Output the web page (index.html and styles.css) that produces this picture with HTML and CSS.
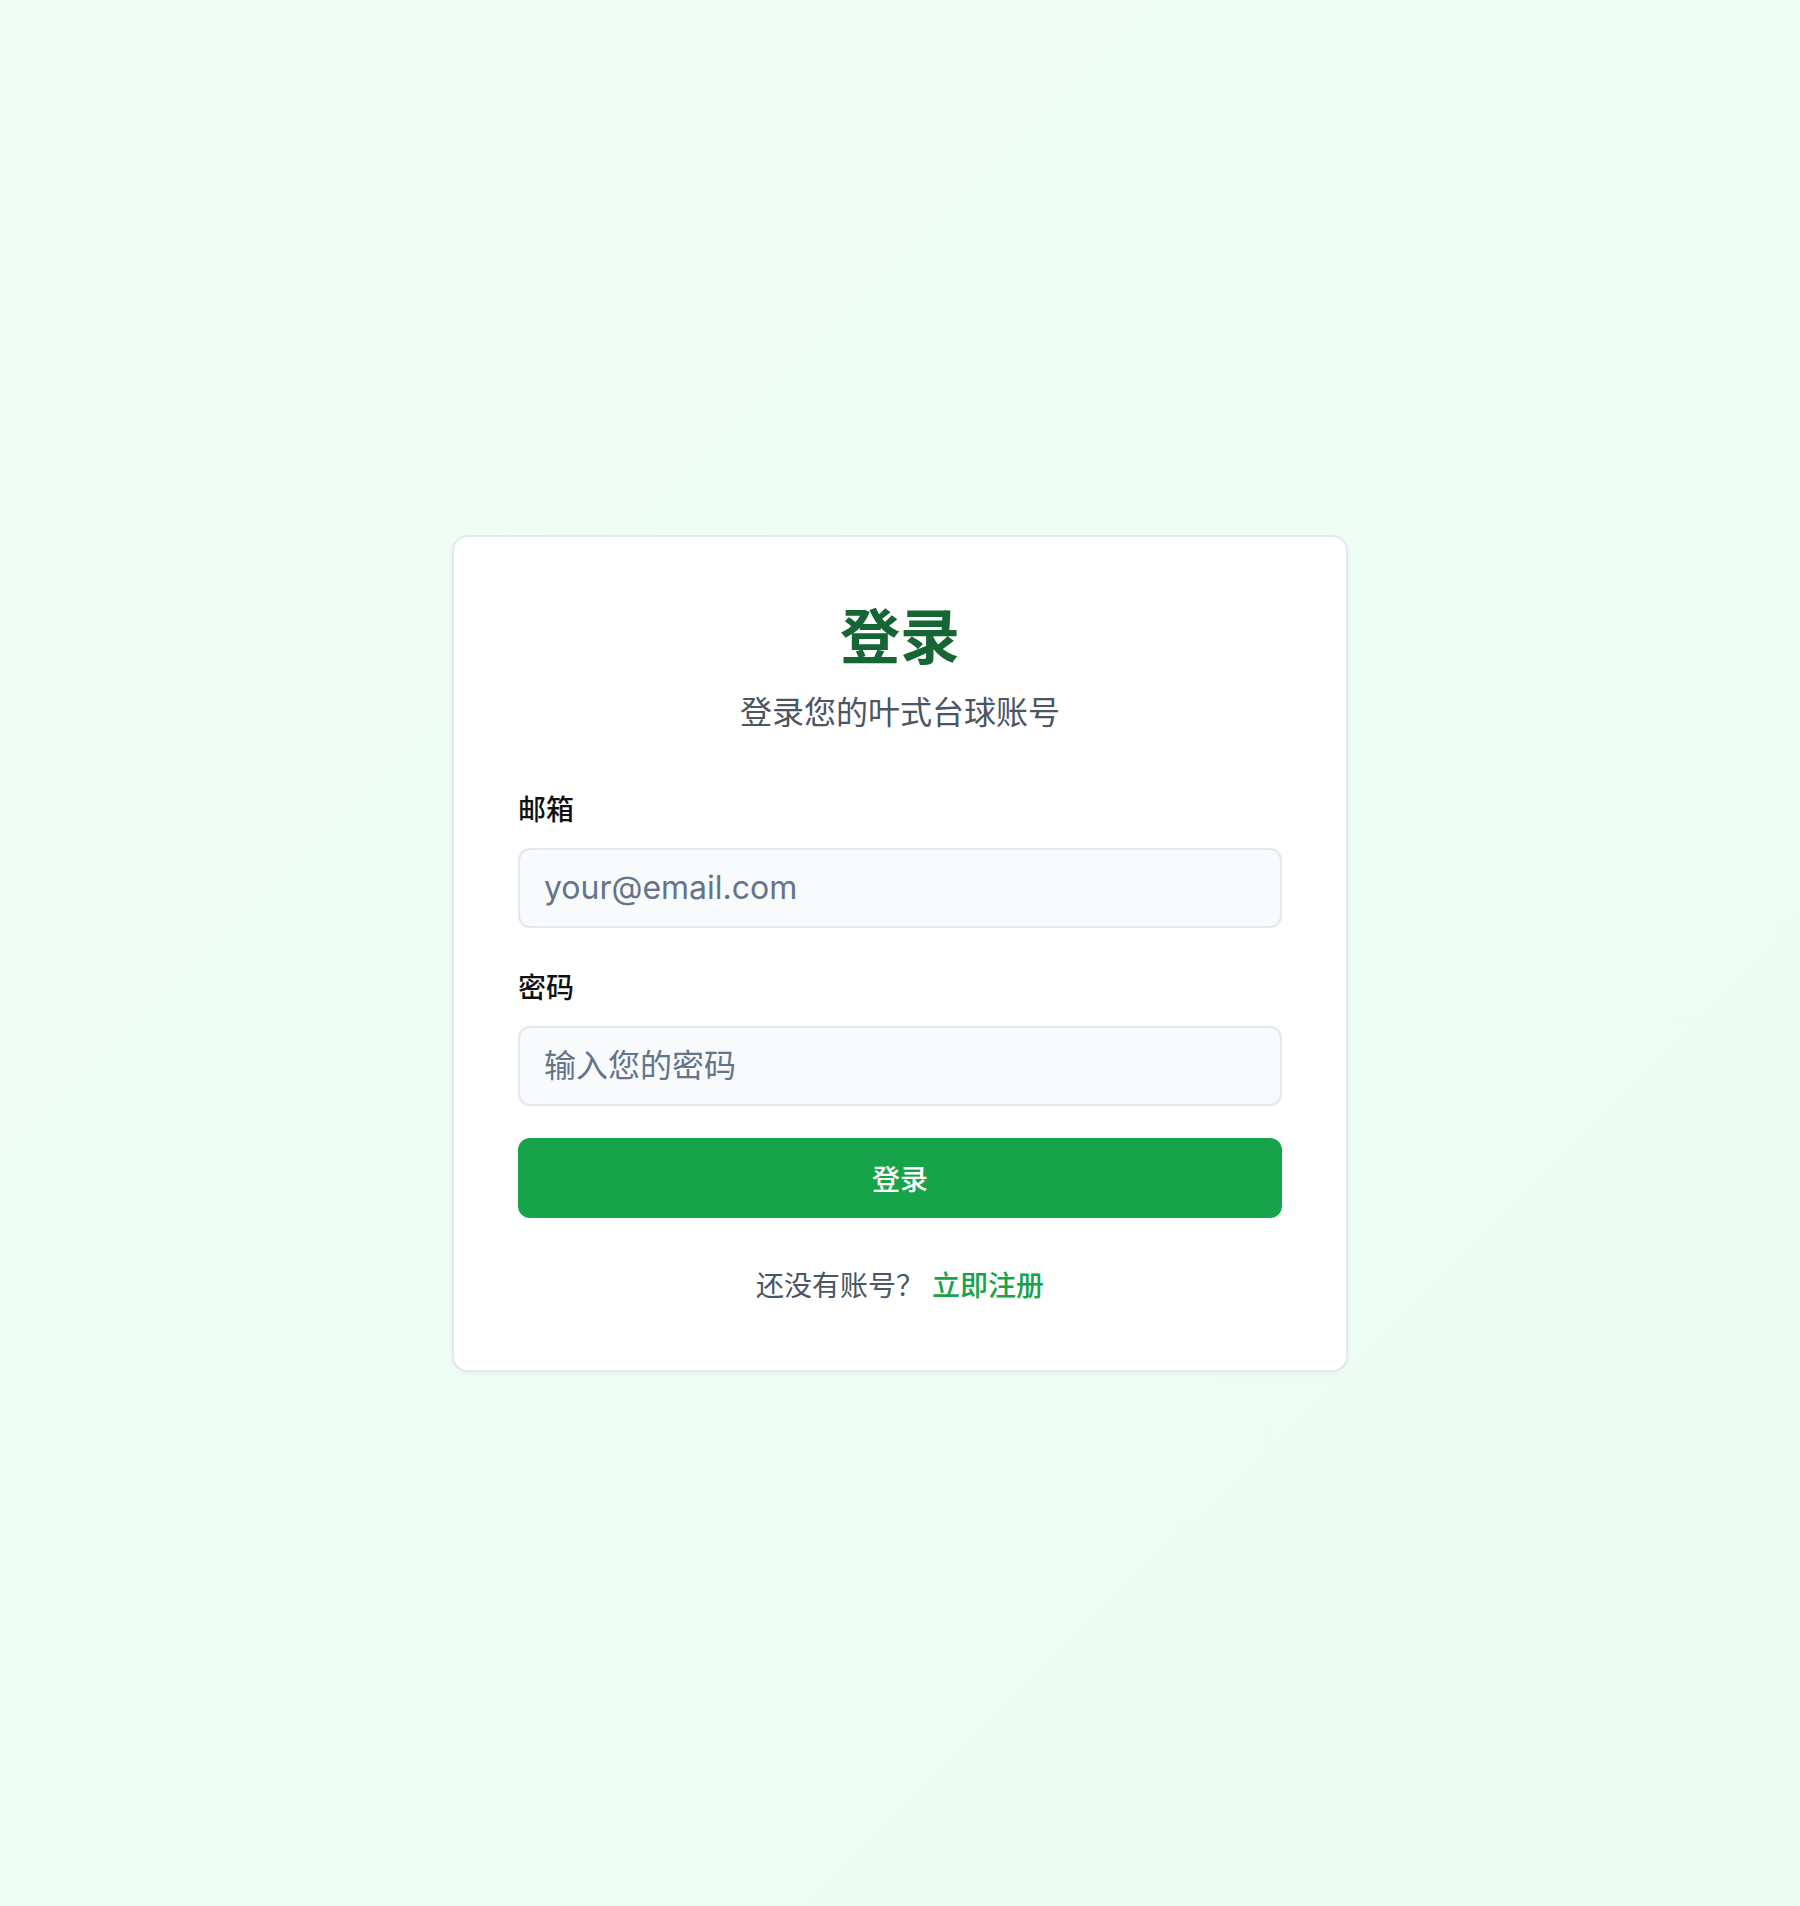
FILE: index.html
```html
<!DOCTYPE html>
<html lang="zh-CN">
<head>
<meta charset="utf-8">
<title>登录</title>
<link rel="stylesheet" href="styles.css">
</head>
<body>
<main class="page">
  <section class="card">
    <header class="card-header">
      <h1 class="title">登录</h1>
      <p class="subtitle">登录您的叶式台球账号</p>
    </header>
    <form class="form">
      <div class="field">
        <label class="label" for="email">邮箱</label>
        <input class="input" id="email" type="email" placeholder="your@email.com">
      </div>
      <div class="field">
        <label class="label" for="password">密码</label>
        <input class="input" id="password" type="password" placeholder="输入您的密码">
      </div>
      <button class="btn" type="button">登录</button>
    </form>
    <p class="footer">还没有账号？ <a class="link" href="#">立即注册</a></p>
  </section>
</main>
</body>
</html>
```

FILE: styles.css
```css
* { box-sizing: border-box; }
html, body { margin: 0; padding: 0; }
body {
  font-family: Inter, "Noto Sans CJK SC", "Noto Sans", sans-serif;
  background: linear-gradient(135deg, #f0fdf4 0%, #ecfdf5 100%);
  min-height: 100vh;
}
.page {
  min-height: 100vh;
  display: flex;
  align-items: center;
  justify-content: center;
}
.card {
  width: 896px;
  background: #ffffff;
  border: 2px solid #e2e8f0;
  border-radius: 16px;
  box-shadow: 0 2px 4px rgba(15, 23, 42, 0.05);
  padding: 64px;
}
.card-header {
  text-align: center;
  margin-bottom: 53px;
}
.title {
  margin: 0;
  font-size: 60px;
  line-height: 72px;
  font-weight: 700;
  color: #166534;
}
.subtitle {
  margin: 16px 0 0;
  font-size: 32px;
  line-height: 48px;
  color: #4b5563;
}
.form {
  display: flex;
  flex-direction: column;
}
.field {
  display: flex;
  flex-direction: column;
  margin-bottom: 40px;
}
.field + .field { margin-bottom: 32px; }
.label {
  font-size: 28px;
  line-height: 40px;
  font-weight: 500;
  color: #111111;
  margin-bottom: 18px;
}
.input {
  height: 80px;
  width: 100%;
  border: 2px solid #e2e8f0;
  border-radius: 12px;
  background: #f8fafb;
  padding: 0 24px;
  font-family: Inter, "Noto Sans CJK SC", sans-serif;
  font-size: 32px;
  color: #111;
  outline: none;
}
.input::placeholder { color: #64748b; opacity: 1; }
.btn {
  height: 80px;
  width: 100%;
  border: none;
  border-radius: 12px;
  background: #16a34a;
  color: #ffffff;
  font-family: Inter, "Noto Sans CJK SC", sans-serif;
  font-size: 28px;
  font-weight: 500;
  cursor: pointer;
}
.footer {
  margin: 48px 0 0;
  text-align: center;
  font-size: 28px;
  line-height: 40px;
  color: #4b5563;
}
.link {
  color: #16a34a;
  font-weight: 500;
  text-decoration: none;
}
```
